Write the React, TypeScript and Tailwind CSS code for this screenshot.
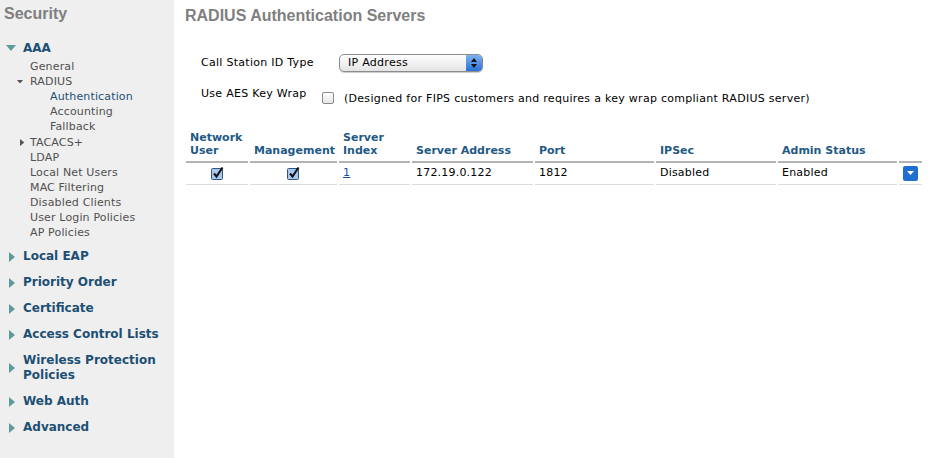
import React from 'react';

const verdana = { fontFamily: '"DejaVu Sans", Verdana, sans-serif' };
const arial = { fontFamily: '"Liberation Sans", Arial, sans-serif' };

const TriDown = ({ size = 10, color = '#5f9a9a' }: { size?: number; color?: string }) => (
  <svg width={size} height={size * 0.6} viewBox="0 0 10 6">
    <path d="M0 0 L10 0 L5 6 Z" fill={color} />
  </svg>
);

const TriRight = ({ h = 10, color = '#5f9a9a' }: { h?: number; color?: string }) => (
  <svg width={h * 0.6} height={h} viewBox="0 0 6 10">
    <path d="M0 0 L6 5 L0 10 Z" fill={color} />
  </svg>
);

const CheckedBox = () => (
  <svg width="13" height="13" viewBox="0 0 13 13">
    <rect x="0.5" y="1.5" width="11" height="11" rx="1" fill="#a9c8ef" stroke="#33557a" />
    <path d="M3 6.5 L5.5 9.5 L11.5 0.5" stroke="#111" strokeWidth="2" fill="none" />
  </svg>
);

const bottomSections = ['Local EAP', 'Priority Order', 'Certificate', 'Access Control Lists', 'Wireless Protection Policies', 'Web Auth', 'Advanced'];

const aaaLinks = ['LDAP', 'Local Net Users', 'MAC Filtering', 'Disabled Clients', 'User Login Policies', 'AP Policies'];

const headers = [['Network', 'User'], ['Management'], ['Server', 'Index'], ['Server Address'], ['Port'], ['IPSec'], ['Admin Status'], ['']];

const Sidebar = () => (
  <div className="w-[174px] shrink-0 bg-[#efefef] min-h-[458px]">
    <div className="pl-[4px] pt-[2px] text-[16px] font-bold text-[#7f7f7f]" style={arial}>
      Security
    </div>
    <div className="mt-[14px] text-[11px] leading-[15px] tracking-[0.15px]" style={verdana}>
      <div className="flex items-center h-[16px]">
        <span className="pl-[6px] w-[23px]"><TriDown size={10} /></span>
        <span className="text-[12px] font-bold text-[#1d4f74] tracking-normal">AAA</span>
      </div>
      <div className="mt-[3px] text-[#505050]">
        <div className="pl-[30px]">General</div>
        <div className="flex items-center">
          <span className="pl-[17px] w-[30px]"><TriDown size={6} color="#555" /></span>
          <span>RADIUS</span>
        </div>
        <div className="pl-[50px] text-[#1d4f74]">Authentication</div>
        <div className="pl-[50px]">Accounting</div>
        <div className="pl-[50px]">Fallback</div>
        <div className="flex items-center mt-[1px]">
          <span className="pl-[20px] w-[30px]"><TriRight h={7} color="#555" /></span>
          <span>TACACS+</span>
        </div>
        {aaaLinks.map((l) => (
          <div key={l} className="pl-[30px]">{l}</div>
        ))}
      </div>
      <div className="mt-[9px] flex flex-col gap-[11px]">
        {bottomSections.map((s) => (
          <div key={s} className="flex items-center">
            <span className="pl-[9px] w-[23px]"><TriRight h={10} /></span>
            <span className="text-[12px] font-bold text-[#1d4f74] leading-[15px] w-[140px] tracking-normal">{s}</span>
          </div>
        ))}
      </div>
    </div>
  </div>
);

const SelectBox = () => (
  <div className="relative w-[144px] h-[18px] rounded-[5px] border border-[#8c8c8c] bg-gradient-to-b from-[#ffffff] to-[#e4e4e4] shadow-[0_1px_1px_rgba(0,0,0,0.2)] flex items-center">
    <span className="pl-[8px] text-[11px] text-black" style={verdana}>IP Address</span>
    <span className="absolute right-0 top-0 bottom-0 w-[16px] rounded-r-[4px] bg-gradient-to-b from-[#7fb3ee] to-[#2a6fd6] flex flex-col items-center justify-center gap-[2px]">
      <svg width="6" height="4" viewBox="0 0 6 4"><path d="M0 4 L3 0 L6 4 Z" fill="#111" /></svg>
      <svg width="6" height="4" viewBox="0 0 6 4"><path d="M0 0 L3 4 L6 0 Z" fill="#111" /></svg>
    </span>
  </div>
);

const cell = 'border-b border-[#dcdcdc] h-[22px] flex items-center text-black';

const ServerTable = () => (
  <div
    className="ml-[12px] mt-[23px] grid grid-cols-[62px_87px_71px_121px_119px_120px_119px_23px] gap-x-[2px] text-[11px] tracking-[0.2px]"
    style={verdana}
  >
    {headers.map((h, i) => (
      <div key={i} className="flex flex-col justify-end font-bold text-[#1f5a85] leading-[13px] pl-[4px] pb-[4px] border-b-2 border-[#b4b4b4] tracking-normal">
        {h.map((l, j) => (
          <div key={j}>{l}</div>
        ))}
      </div>
    ))}
    <div className={`${cell} justify-center`}><CheckedBox /></div>
    <div className={`${cell} justify-center`}><CheckedBox /></div>
    <div className={`${cell} pl-[4px]`}><a className="text-[#1a4fa8] underline">1</a></div>
    <div className={`${cell} pl-[4px]`}>172.19.0.122</div>
    <div className={`${cell} pl-[4px]`}>1812</div>
    <div className={`${cell} pl-[4px]`}>Disabled</div>
    <div className={`${cell} pl-[4px]`}>Enabled</div>
    <div className={`${cell} pl-[4px]`}>
      <span className="flex w-[15px] h-[15px] rounded-[2px] bg-[#1f6fd2] items-center justify-center">
        <svg width="7" height="4" viewBox="0 0 7 4"><path d="M0 0 L7 0 L3.5 4 Z" fill="#fff" /></svg>
      </span>
    </div>
  </div>
);

export default function App() {
  return (
    <div className="flex w-[951px] h-[458px] overflow-hidden bg-white">
      <Sidebar />
      <div className="flex-1">
        <div className="pl-[11px] pt-[4px] text-[16px] font-bold text-[#7f7f7f]" style={arial}>
          RADIUS Authentication Servers
        </div>
        <div className="pl-[27px] mt-[26px] text-[11px] text-black tracking-[0.28px]" style={verdana}>
          <div className="flex items-center h-[18px]">
            <span className="w-[138px]">Call Station ID Type</span>
            <SelectBox />
          </div>
          <div className="flex items-start mt-[14px]">
            <span className="w-[121px]">Use AES Key Wrap</span>
            <span className="mt-[6px] w-[12px] h-[12px] border border-[#8a8a8a] rounded-[2px] bg-gradient-to-b from-white to-[#e6e6e6]" />
            <span className="ml-[10px] mt-[5px]">(Designed for FIPS customers and requires a key wrap compliant RADIUS server)</span>
          </div>
        </div>
        <ServerTable />
      </div>
    </div>
  );
}
